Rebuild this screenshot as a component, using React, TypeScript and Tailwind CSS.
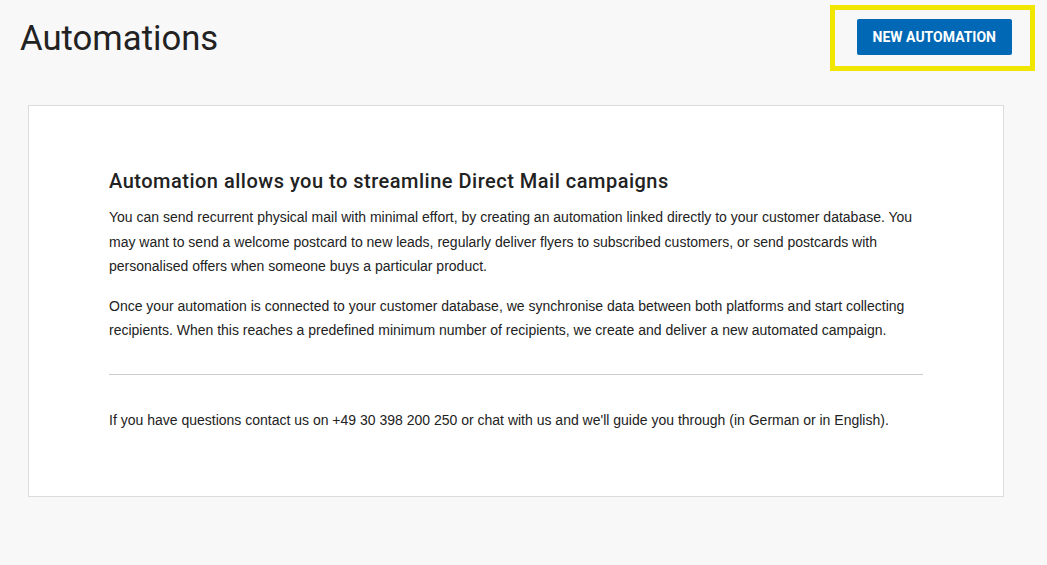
export default function App() {
  return (
    <div className="min-h-screen w-full bg-[#f8f8f8] pb-16 text-[#222]">
      <div className="relative flex items-start justify-between pl-[20px] pr-[35px] pt-[16px]">
        <h1 className="font-['Roboto',sans-serif] text-[34.7px] font-normal leading-[44px] text-[#222]">
          Automations
        </h1>
        <button className="mt-[3px] h-[36px] rounded-[2px] bg-[#0068b4] px-4 pt-px font-['Roboto',sans-serif] text-[14px] font-bold uppercase text-white">
          New Automation
        </button>
        <div className="pointer-events-none absolute left-[830px] top-[5px] h-[66px] w-[205px] border-[5px] border-[#f0e600]" />
      </div>

      <div className="ml-[28px] mt-[45px] w-[976px] border border-[#dcdcdc] bg-white px-[80px] pb-[64px] pt-[61px]">
        <h2 className="font-['Roboto',sans-serif] text-[20px] font-medium leading-[28px] tracking-[0.5px] text-[#222]">
          Automation allows you to streamline Direct Mail campaigns
        </h2>
        <div className="mt-[10px] space-y-[15px] font-['Liberation_Sans',Arial,sans-serif] text-[14px] leading-[24.5px] text-[#222]">
          <p>
            You can send recurrent physical mail with minimal effort, by creating an automation linked directly to your
            customer database. You may want to send a welcome postcard to new leads, regularly deliver flyers to
            subscribed customers, or send postcards with personalised offers when someone buys a particular product.
          </p>
          <p>
            Once your automation is connected to your customer database, we synchronise data between both platforms and
            start collecting recipients. When this reaches a predefined minimum number of recipients, we create and
            deliver a new automated campaign.
          </p>
        </div>
        <hr className="mt-[31px] border-t border-[#cccccc]" />
        <p className="mt-[33px] font-['Liberation_Sans',Arial,sans-serif] text-[14px] leading-[24px] text-[#222]">
          If you have questions contact us on +49 30 398 200 250 or chat with us and we'll guide you through (in German
          or in English).
        </p>
      </div>
    </div>
  );
}
